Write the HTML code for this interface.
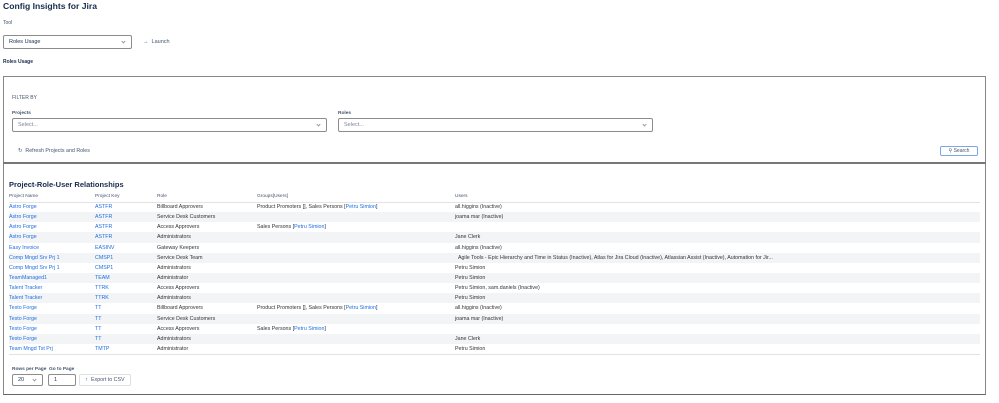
<!DOCTYPE html>
<html><head><meta charset="utf-8"><style>
*{box-sizing:border-box;margin:0;padding:0}
body{width:999px;height:403px;overflow:hidden;background:#fff;font-family:"Liberation Sans",sans-serif;color:#172b4d;position:relative}
.a{position:absolute;white-space:nowrap}
.sel{position:absolute;border:1px solid #8c8c8c;border-radius:2px;background:#fff;font-size:5.5px;color:#172b4d;padding-left:5px;display:flex;align-items:center}
.sel .ch{position:absolute;right:6px;top:50%;width:3px;height:3px;border-right:0.6px solid #999;border-bottom:0.6px solid #999;transform:translateY(-70%) rotate(45deg)}
.lbl{font-size:4.8px;font-weight:bold;color:#44546f}
table{position:absolute;left:9px;top:192px;width:971px;border-collapse:collapse;font-size:5.3px}
th{font-weight:normal;text-align:left;height:10px;color:#44546f;border-bottom:1px solid #e3e3e3;font-size:4.8px}
td{height:10.15px;color:#333}
tr:nth-child(even) td{background:#f3f4f6}
a{color:#1f6fe0;text-decoration:none}
tbody tr:last-child td{border-bottom:1px solid #e3e3e3}
</style></head><body>
<div class="a" style="left:3px;top:1px;font-size:8.6px;font-weight:bold">Config Insights for Jira</div>
<div class="a" style="left:3px;top:20px;font-size:5px;color:#44546f">Tool</div>
<div class="sel" style="left:3px;top:35px;width:129px;height:14px">Roles Usage<span class="ch"></span></div>
<div class="a" style="left:143px;top:39px;font-size:5.5px;color:#44546f">→&nbsp;&nbsp;Launch</div>
<div class="a" style="left:3px;top:59px;font-size:5px;font-weight:bold">Roles Usage</div>

<div class="a" style="left:3px;top:76px;width:983px;height:319px;border:1px solid #888;border-bottom:1px solid #666"></div>
<div class="a" style="left:3px;top:162px;width:983px;height:2px;background:#777"></div>

<div class="a" style="left:12px;top:95px;font-size:5px;color:#44546f">FILTER BY</div>
<div class="a lbl" style="left:12px;top:111px">Projects</div>
<div class="sel" style="left:12px;top:118px;width:315px;height:14px;color:#7a869a">Select...<span class="ch"></span></div>
<div class="a lbl" style="left:338px;top:111px">Roles</div>
<div class="sel" style="left:338px;top:118px;width:315px;height:14px;color:#7a869a">Select...<span class="ch"></span></div>
<div class="a" style="left:18px;top:148px;font-size:5.3px;color:#44546f">↻&nbsp;&nbsp;Refresh Projects and Roles</div>
<div class="a" style="left:940px;top:146px;width:38px;height:10px;border:1px solid #7aa7e8;border-radius:2px;font-size:5px;color:#44546f;text-align:center;line-height:8px">⚲ Search</div>

<div class="a" style="left:9px;top:180px;font-size:7.5px;font-weight:bold">Project-Role-User Relationships</div>
<table>
<colgroup><col style="width:86px"><col style="width:62px"><col style="width:100px"><col style="width:198px"><col></colgroup>
<thead><tr><th>Project Name</th><th>Project Key</th><th>Role</th><th>Groups[Users]</th><th>Users</th></tr></thead>
<tbody>
<tr><td><a>Astro Forge</a></td><td><a>ASTFR</a></td><td>Billboard Approvers</td><td>Product Promoters [], Sales Persons [<a>Petru Simion</a>]</td><td>all.higgins (Inactive)</td></tr>
<tr><td><a>Astro Forge</a></td><td><a>ASTFR</a></td><td>Service Desk Customers</td><td></td><td>joama mar (Inactive)</td></tr>
<tr><td><a>Astro Forge</a></td><td><a>ASTFR</a></td><td>Access Approvers</td><td>Sales Persons [<a>Petru Simion</a>]</td><td></td></tr>
<tr><td><a>Astro Forge</a></td><td><a>ASTFR</a></td><td>Administrators</td><td></td><td>Jane Clerk</td></tr>
<tr><td><a>Easy Invoice</a></td><td><a>EASINV</a></td><td>Gateway Keepers</td><td></td><td>all.higgins (Inactive)</td></tr>
<tr><td><a>Comp Mngd Srv Prj 1</a></td><td><a>CMSP1</a></td><td>Service Desk Team</td><td></td><td>&nbsp;&nbsp;Agile Tools - Epic Hierarchy and Time in Status (Inactive), Atlas for Jira Cloud (Inactive), Atlassian Assist (Inactive), Automation for Jir...</td></tr>
<tr><td><a>Comp Mngd Srv Prj 1</a></td><td><a>CMSP1</a></td><td>Administrators</td><td></td><td>Petru Simion</td></tr>
<tr><td><a>TeamManaged1</a></td><td><a>TEAM</a></td><td>Administrator</td><td></td><td>Petru Simion</td></tr>
<tr><td><a>Talent Tracker</a></td><td><a>TTRK</a></td><td>Access Approvers</td><td></td><td>Petru Simion, sam.daniels (Inactive)</td></tr>
<tr><td><a>Talent Tracker</a></td><td><a>TTRK</a></td><td>Administrators</td><td></td><td>Petru Simion</td></tr>
<tr><td><a>Testo Forge</a></td><td><a>TT</a></td><td>Billboard Approvers</td><td>Product Promoters [], Sales Persons [<a>Petru Simion</a>]</td><td>all.higgins (Inactive)</td></tr>
<tr><td><a>Testo Forge</a></td><td><a>TT</a></td><td>Service Desk Customers</td><td></td><td>joama mar (Inactive)</td></tr>
<tr><td><a>Testo Forge</a></td><td><a>TT</a></td><td>Access Approvers</td><td>Sales Persons [<a>Petru Simion</a>]</td><td></td></tr>
<tr><td><a>Testo Forge</a></td><td><a>TT</a></td><td>Administrators</td><td></td><td>Jane Clerk</td></tr>
<tr><td><a>Team Mngd Tst Prj</a></td><td><a>TMTP</a></td><td>Administrator</td><td></td><td>Petru Simion</td></tr>
</tbody></table>

<div class="a lbl" style="left:12px;top:367px">Rows per Page</div>
<div class="a lbl" style="left:49px;top:367px">Go to Page</div>
<div class="sel" style="left:12px;top:374px;width:31px;height:12px">20<span class="ch"></span></div>
<div class="sel" style="left:48px;top:374px;width:28px;height:12px">1</div>
<div class="a" style="left:79px;top:374px;width:52px;height:12px;border:1px solid #e0e0e0;border-radius:2px;font-size:5.3px;color:#44546f;line-height:10px;text-align:center">↑&nbsp;&nbsp;Export to CSV</div>
</body></html>
